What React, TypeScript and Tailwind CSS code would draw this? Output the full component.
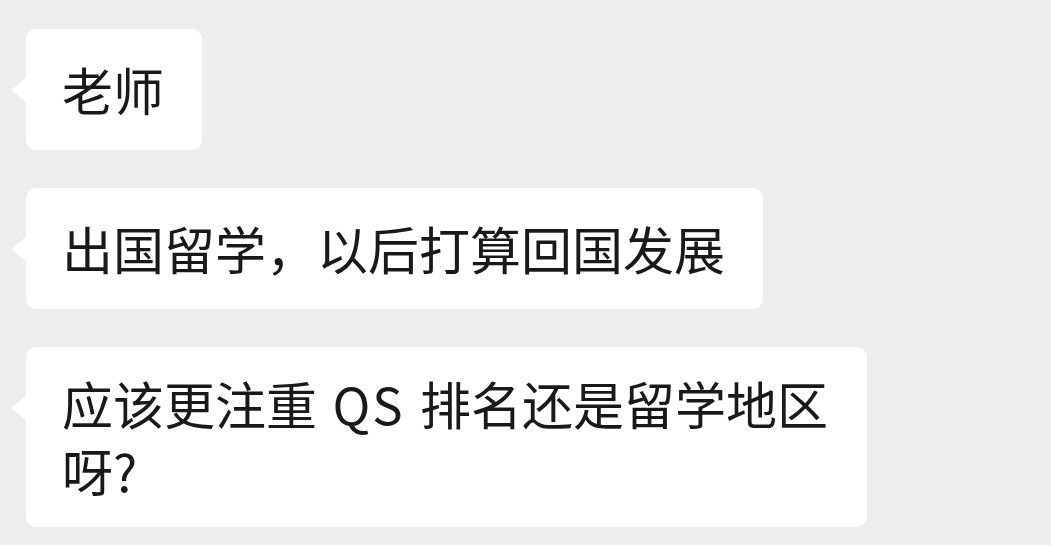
import React from "react";

function Tail() {
  return (
    <svg
      className="absolute left-[-16px] top-[48px]"
      width="17"
      height="26"
      viewBox="0 0 17 26"
    >
      <path d="M17 0 L17 26 L3 14.5 Q1 13 3 11.5 Z" fill="#ffffff" />
    </svg>
  );
}

function Bubble({
  children,
  className = "",
}: {
  children: React.ReactNode;
  className?: string;
}) {
  return (
    <div
      className={
        "relative bg-white rounded-[10px] pl-[36px] pr-[38px] text-[51px] leading-[67px] text-[#191919] " +
        className
      }
    >
      <Tail />
      {children}
    </div>
  );
}

export default function App() {
  return (
    <div
      className="w-[1051px] h-[545px] bg-[#ededed] overflow-hidden flex flex-col items-start gap-[38px] pt-[29px] pl-[26px]"
      style={{ fontFamily: '"Noto Sans CJK SC", "Noto Sans", sans-serif' }}
    >
      <Bubble className="py-[27px] whitespace-nowrap">老师</Bubble>
      <Bubble className="py-[27px] whitespace-nowrap">出国留学，以后打算回国发展</Bubble>
      <Bubble className="py-[23px] w-[841px] whitespace-nowrap">
        应该更注重 <span className="tracking-[2px] mx-[4px]">QS</span> 排名还是留学地区
        <br />
        呀?
      </Bubble>
    </div>
  );
}
